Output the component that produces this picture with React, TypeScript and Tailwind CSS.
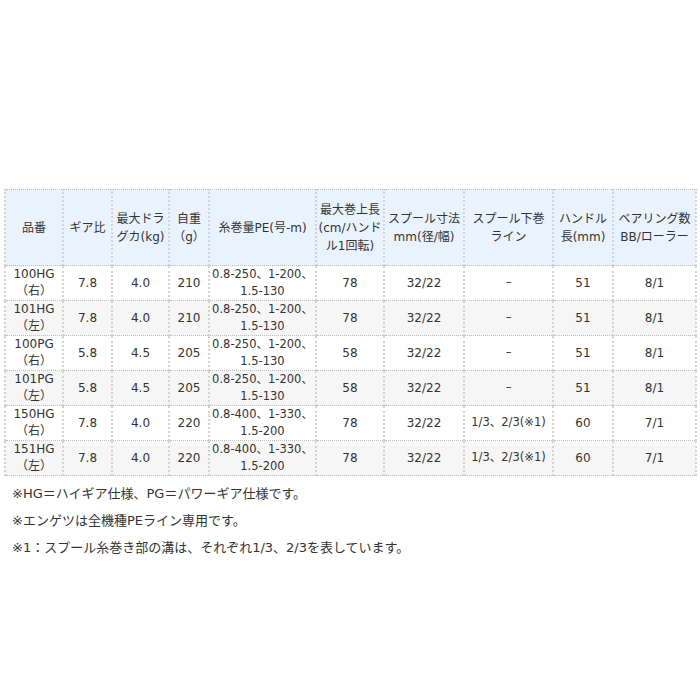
const font = { fontFamily: '"DejaVu Sans", "Noto Sans CJK JP", sans-serif' }

const headers = [
  ['品番'],
  ['ギア比'],
  ['最大ドラ', 'グカ(kg)'],
  ['自重', '（g）'],
  ['糸巻量PE(号-m)'],
  ['最大巻上長', '(cm/ハンド', 'ル1回転)'],
  ['スプール寸法', 'mm(径/幅)'],
  ['スプール下巻', 'ライン'],
  ['ハンドル', '長(mm)'],
  ['ベアリング数', 'BB/ローラー'],
]

const widths = [58, 49, 57, 40, 107, 68, 80, 89, 60, 83]

const rows = [
  ['100HG', '（右）', '7.8', '4.0', '210', '0.8-250、1-200、', '1.5-130', '78', '32/22', '–', '51', '8/1'],
  ['101HG', '（左）', '7.8', '4.0', '210', '0.8-250、1-200、', '1.5-130', '78', '32/22', '–', '51', '8/1'],
  ['100PG', '（右）', '5.8', '4.5', '205', '0.8-250、1-200、', '1.5-130', '58', '32/22', '–', '51', '8/1'],
  ['101PG', '（左）', '5.8', '4.5', '205', '0.8-250、1-200、', '1.5-130', '58', '32/22', '–', '51', '8/1'],
  ['150HG', '（右）', '7.8', '4.0', '220', '0.8-400、1-330、', '1.5-200', '78', '32/22', '1/3、2/3(※1)', '60', '7/1'],
  ['151HG', '（左）', '7.8', '4.0', '220', '0.8-400、1-330、', '1.5-200', '78', '32/22', '1/3、2/3(※1)', '60', '7/1'],
]

const cell =
  'border-x-2 border-x-[#d2d2d2] border-y border-dotted border-y-[#bdbdbd] text-center align-middle p-0 whitespace-nowrap overflow-visible'

export default function App() {
  return (
    <div className="w-[700px] h-[700px] bg-white text-[#333]" style={font}>
      <div className="pt-[189px] pl-[4px]">
        <table className="border-collapse table-fixed w-[691px] text-[12px]">
          <colgroup>
            {widths.map((w, i) => (
              <col key={i} style={{ width: w }} />
            ))}
          </colgroup>
          <thead>
            <tr className="h-[76px] bg-[#eaf3fd]">
              {headers.map((h, i) => (
                <th key={i} className={`${cell} font-normal leading-[18px]`}>
                  {h.map((l, j) => (
                    <div key={j}>{l}</div>
                  ))}
                </th>
              ))}
            </tr>
          </thead>
          <tbody>
            {rows.map((r, i) => (
              <tr key={i} className={`h-[34.5px] ${i % 2 === 1 ? 'bg-[#f6f6f6]' : 'bg-white'}`}>
                <td className={`${cell} leading-[17px]`}>
                  <div>{r[0]}</div>
                  <div>{r[1]}</div>
                </td>
                <td className={cell}>{r[2]}</td>
                <td className={cell}>{r[3]}</td>
                <td className={cell}>{r[4]}</td>
                <td className={`${cell} leading-[17px] text-[11.5px]`}>
                  <div>{r[5]}</div>
                  <div>{r[6]}</div>
                </td>
                <td className={cell}>{r[7]}</td>
                <td className={cell}>{r[8]}</td>
                <td className={`${cell} text-[11.5px]`}>{r[9]}</td>
                <td className={cell}>{r[10]}</td>
                <td className={cell}>{r[11]}</td>
              </tr>
            ))}
          </tbody>
        </table>
        <div className="pl-[8px] pt-[4px] text-[13px] leading-[27px]">
          <p>※HG＝ハイギア仕様、PG＝パワーギア仕様です。</p>
          <p>※エンゲツは全機種PEライン専用です。</p>
          <p>※1：スプール糸巻き部の溝は、それぞれ1/3、2/3を表しています。</p>
        </div>
      </div>
    </div>
  )
}
